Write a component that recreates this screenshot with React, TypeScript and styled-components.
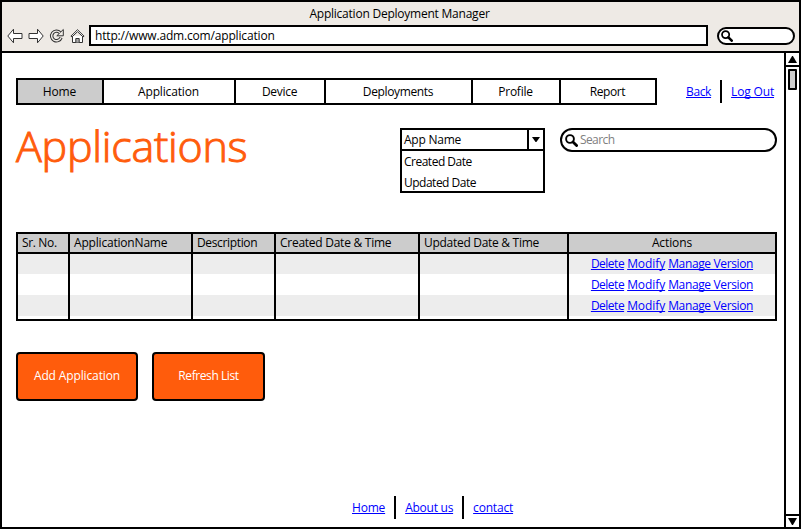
import React from 'react';
import styled, { createGlobalStyle } from 'styled-components';

const ORANGE = '#ff5c0c';

const GlobalStyle = createGlobalStyle`
  * { box-sizing: border-box; }
  body { margin: 0; background: #fff; }
`;

const Window = styled.div`
  width: 801px;
  height: 529px;
  display: flex;
  flex-direction: column;
  border: 2px solid #000;
  background: #fff;
  color: #000;
  font: 12px/16px "Open Sans", "Noto Sans", sans-serif;
  overflow: hidden;
`;

const Label = styled.span<{ $track?: number }>`
  letter-spacing: ${(p) => p.$track ?? 0}px;
  white-space: nowrap;
`;

const Link = styled.a<{ $track?: number }>`
  color: #0000ff;
  letter-spacing: ${(p) => p.$track ?? 0}px;
  text-decoration: underline;
  text-decoration-thickness: 1px;
  text-underline-offset: 1px;
  text-decoration-skip-ink: none;
  white-space: nowrap;
`;

const Chrome = styled.header`
  flex: none;
  height: 51px;
  background: #eeeae5;
  border-bottom: 2px solid #000;
`;

const WindowTitle = styled.div`
  height: 23px;
  padding: 4px 2px 0 0;
  text-align: center;
`;

const Toolbar = styled.div`
  display: flex;
  align-items: center;
  height: 21px;
  padding: 0 4px 0 5px;
`;

const NavIcons = styled.div`
  display: flex;
  align-items: center;
  width: 82px;
  gap: 5px;
  svg { flex: none; display: block; }
`;

const AddressBar = styled.div`
  width: 619px;
  height: 21px;
  padding: 1px 0 0 4px;
  border: 2px solid #000;
  background: #fff;
`;

const SearchPill = styled.div<{ $w: number; $h: number }>`
  display: flex;
  align-items: center;
  gap: 2px;
  width: ${(p) => p.$w}px;
  height: ${(p) => p.$h}px;
  padding-left: 3px;
  border: 2px solid #000;
  border-radius: ${(p) => p.$h / 2}px;
  background: #fff;
  color: #808080;
  svg { flex: none; }
`;

const ToolbarSearch = styled(SearchPill)`
  margin: 1px 0 0 9px;
  padding-left: 2px;
`;

const Viewport = styled.div`
  flex: 1;
  display: flex;
  min-height: 0;
`;

const Page = styled.main`
  flex: 1;
  display: flex;
  flex-direction: column;
  padding: 25px 7px 8px 14px;
`;

const Scrollbar = styled.div`
  display: flex;
  flex-direction: column;
  width: 15px;
  border-left: 2px solid #000;
`;

const ScrollButton = styled.div<{ $end?: boolean }>`
  display: flex;
  align-items: center;
  justify-content: center;
  height: ${(p) => (p.$end ? 13 : 14)}px;
  border: 0 solid #000;
  border-width: ${(p) => (p.$end ? '2px 0 0' : '0 0 2px')};
`;

const Track = styled.div`
  flex: 1;
  padding: 2px;
`;

const Thumb = styled.div`
  width: 9px;
  height: 21px;
  border: 2px solid #000;
  border-radius: 1px;
  background: #ccc;
`;

const TopRow = styled.div`
  display: flex;
  align-items: center;
  height: 27px;
`;

const Tabs = styled.nav`
  display: grid;
  grid-template-columns: 84px 130px 88px 145px 86px 94px;
  gap: 2px;
  width: 641px;
  height: 27px;
  padding: 2px;
  background: #000;
`;

const Tab = styled.div<{ $active?: boolean }>`
  display: flex;
  align-items: center;
  justify-content: center;
  padding: 0 1px 0 0;
  background: ${(p) => (p.$active ? '#ccc' : '#fff')};
`;

const Account = styled.div`
  display: flex;
  align-items: center;
  margin-left: 29px;
`;

const Divider = styled.i<{ $left: number; $right: number }>`
  width: 2px;
  height: 23px;
  margin: 0 ${(p) => p.$right}px 0 ${(p) => p.$left}px;
  background: #000;
`;

const HeadRow = styled.div`
  display: flex;
  align-items: flex-start;
  height: 104px;
  margin-top: 23px;
`;

const Title = styled.h1`
  width: 384px;
  margin: -10px 0 0;
  color: ${ORANGE};
  font-size: 43px;
  font-weight: 300;
  line-height: 56px;
  letter-spacing: -0.25px;
  -webkit-text-stroke: 1px ${ORANGE};
`;

const Select = styled.div`
  width: 145px;
  height: 65px;
  margin-right: 15px;
  border: 2px solid #000;
`;

const SelectValue = styled.div`
  display: flex;
  justify-content: space-between;
  height: 21px;
  padding: 2px 0 0 2px;
  border-bottom: 2px solid #000;
`;

const SelectArrow = styled.div`
  display: flex;
  align-items: center;
  justify-content: center;
  width: 16px;
  height: 19px;
  margin-top: -2px;
  border-left: 2px solid #000;
`;

const Option = styled.div`
  height: 21px;
  padding: 3px 0 0 2px;
`;

const Table = styled.section`
  display: grid;
  grid-template-columns: 50px 121px 81px 142px 147px 206px;
  grid-template-rows: 18px 65px;
  gap: 2px;
  width: 761px;
  height: 89px;
  padding: 2px;
  background: #000;
`;

const HeadCell = styled.div<{ $center?: boolean }>`
  padding-left: ${(p) => (p.$center ? 0 : 4)}px;
  background: #ccc;
  line-height: 18px;
  text-align: ${(p) => (p.$center ? 'center' : 'left')};
`;

const Column = styled.div`
  background: #fff;
`;

const Cell = styled.div`
  display: flex;
  justify-content: center;
  gap: 3px;
  height: 21px;
  padding-top: 3px;
  &:first-child { height: 20px; padding-top: 2px; }
  &:nth-child(odd) { background: #ededed; }
`;

const Buttons = styled.div`
  display: flex;
  gap: 14px;
  margin-top: 31px;
`;

const Button = styled.button<{ $w: number }>`
  width: ${(p) => p.$w}px;
  height: 49px;
  padding: 0 0 1px;
  border: 2px solid #000;
  border-radius: 4px;
  background: ${ORANGE};
  color: #fff;
  font: inherit;
`;

const Footer = styled.footer`
  display: flex;
  align-items: center;
  height: 23px;
  margin: auto 0 0 336px;
`;

const Magnifier = ({ size }: { size: number }) => (
  <svg width={size} height={size} viewBox="0 0 13 13" fill="none" stroke="#000">
    <circle cx="5" cy="5" r="3.9" strokeWidth="1.9" />
    <path d="M8 8l3.6 3.6" strokeWidth="2.8" strokeLinecap="round" />
  </svg>
);

const Arrow = ({ forward }: { forward?: boolean }) => (
  <svg width="16" height="16" viewBox="0 0 16 16" fill="#fff" stroke="#333">
    <path d={forward ? 'M15.2 8L9.5 1.2V5.5h-8.5v5h8.5v4.3z' : 'M0.8 8L6.5 1.2V5.5h8.5v5H6.5v4.3z'} />
  </svg>
);

const Reload = () => (
  <svg width="16" height="16" viewBox="0 0 16 16" fill="none">
    <path d="M11 4.7A4.8 4.8 0 1 0 12 9.6" stroke="#333" strokeWidth="3.4" />
    <path d="M14.3 1.5v6.3H7.8z" fill="#eeeae5" stroke="#333" />
    <path d="M11 4.7A4.8 4.8 0 1 0 11.9 9.8" stroke="#eeeae5" strokeWidth="1.4" />
  </svg>
);

const HomeIcon = () => (
  <svg width="15" height="16" viewBox="0 0 15 16" fill="#fff" stroke="#333">
    <path d="M2.5 8v6.5h10V8" />
    <path d="M0.9 8.2L7.5 1.7L14.1 8.2L13 8.9L7.5 3.7L2 8.9z" />
    <path d="M5.8 14.5v-4h3.4v4" fill="#aaa" />
  </svg>
);

const Triangle = ({ down, w, h }: { down?: boolean; w: number; h: number }) => (
  <svg width={w} height={h} viewBox="0 0 10 8" preserveAspectRatio="none">
    <path d={down ? 'M0 0h10L5.5 8h-1z' : 'M0 8h10L5.5 0h-1z'} />
  </svg>
);

const TABS: [string, number][] = [
  ['Home', -0.15], ['Application', -0.15], ['Device', -0.3],
  ['Deployments', -0.36], ['Profile', -0.25], ['Report', -0.42],
];

const HEADINGS: [string, number][] = [
  ['Sr. No.', -0.35], ['ApplicationName', -0.19], ['Description', -0.35],
  ['Created Date & Time', -0.26], ['Updated Date & Time', -0.29], ['Actions', -0.1],
];

const ROWS = [1, 2, 3];

export default function App() {
  return (
    <Window>
      <GlobalStyle />
      <Chrome>
        <WindowTitle><Label $track={-0.23}>Application Deployment Manager</Label></WindowTitle>
        <Toolbar>
          <NavIcons><Arrow /><Arrow forward /><Reload /><HomeIcon /></NavIcons>
          <AddressBar><Label $track={-0.17}>http://www.adm.com/application</Label></AddressBar>
          <ToolbarSearch $w={78} $h={18}><Magnifier size={12} /></ToolbarSearch>
        </Toolbar>
      </Chrome>
      <Viewport>
        <Page>
          <TopRow>
            <Tabs>
              {TABS.map(([name, track], i) => (
                <Tab key={name} $active={i === 0}><Label $track={track}>{name}</Label></Tab>
              ))}
            </Tabs>
            <Account>
              <Link $track={-0.35}>Back</Link>
              <Divider $left={9} $right={9} />
              <Link $track={-0.16}>Log Out</Link>
            </Account>
          </TopRow>
          <HeadRow>
            <Title>Applications</Title>
            <Select>
              <SelectValue>
                <Label $track={-0.24}>App Name</Label>
                <SelectArrow><Triangle down w={8} h={5} /></SelectArrow>
              </SelectValue>
              <Option><Label $track={-0.5}>Created Date</Label></Option>
              <Option><Label $track={-0.5}>Updated Date</Label></Option>
            </Select>
            <SearchPill $w={217} $h={24}><Magnifier size={13} /><Label $track={-0.6}>Search</Label></SearchPill>
          </HeadRow>
          <Table>
            {HEADINGS.map(([name, track], i) => (
              <HeadCell key={name} $center={i === 5}><Label $track={track}>{name}</Label></HeadCell>
            ))}
            {HEADINGS.map(([name], i) => (
              <Column key={name}>
                {ROWS.map((row) => (
                  <Cell key={row}>
                    {i === 5 && (
                      <>
                        <Link $track={-0.5}>Delete</Link>
                        <Link $track={-0.07}>Modify</Link>
                        <Link $track={-0.36}>Manage Version</Link>
                      </>
                    )}
                  </Cell>
                ))}
              </Column>
            ))}
          </Table>
          <Buttons>
            <Button $w={122}><Label $track={-0.13}>Add Application</Label></Button>
            <Button $w={113}><Label $track={-0.42}>Refresh List</Label></Button>
          </Buttons>
          <Footer>
            <Link $track={-0.2}>Home</Link>
            <Divider $left={9} $right={9} />
            <Link $track={-0.25}>About us</Link>
            <Divider $left={9} $right={9} />
            <Link $track={-0.19}>contact</Link>
          </Footer>
        </Page>
        <Scrollbar>
          <ScrollButton><Triangle w={9} h={7} /></ScrollButton>
          <Track><Thumb /></Track>
          <ScrollButton $end><Triangle down w={9} h={7} /></ScrollButton>
        </Scrollbar>
      </Viewport>
    </Window>
  );
}
